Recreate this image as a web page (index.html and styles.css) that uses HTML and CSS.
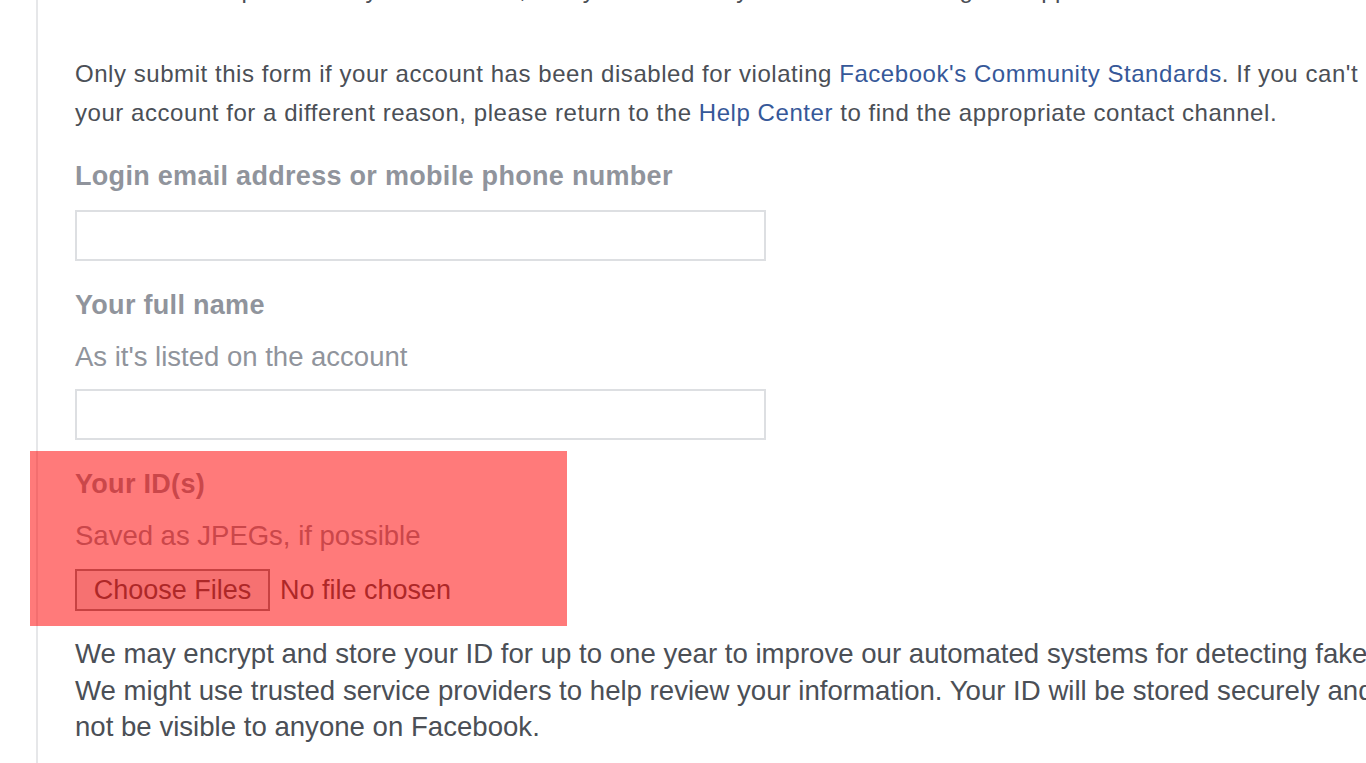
FILE: index.html
```html
<!DOCTYPE html>
<html lang="en">
<head>
<meta charset="utf-8">
<title>Disabled account form</title>
<link rel="stylesheet" href="styles.css">
</head>
<body>
<div class="page">
  <div class="content">
    <p class="text cut">Make sure the photo is of your whole ID, every detail is easy to read and nothing is cropped.</p>
    <p class="text intro">Only submit this form if your account has been disabled for violating <a href="#">Facebook's Community Standards</a>. If you can't log into<br>your account for a different reason, please return to the <a href="#">Help Center</a> to find the appropriate contact channel.</p>

    <div class="field">
      <label class="label">Login email address or mobile phone number</label>
      <div class="input"></div>
    </div>

    <div class="field">
      <label class="label">Your full name</label>
      <div class="hint">As it's listed on the account</div>
      <div class="input"></div>
    </div>

    <div class="field highlight">
      <label class="label">Your ID(s)</label>
      <div class="hint">Saved as JPEGs, if possible</div>
      <div class="file">
        <button class="file-btn" type="button">Choose Files</button>
        <span class="file-name">No file chosen</span>
      </div>
    </div>

    <p class="text outro">We may encrypt and store your ID for up to one year to improve our automated systems for detecting fake accounts.<br>We might use trusted service providers to help review your information. Your ID will be stored securely and will<br>not be visible to anyone on Facebook.</p>
  </div>
</div>
</body>
</html>
```

FILE: styles.css
```css
html, body {
  margin: 0;
  padding: 0;
  background: #ffffff;
  overflow: hidden;
  height: 763px;
}

body {
  font-family: "Liberation Sans", Arial, sans-serif;
  color: #4b4f56;
}

.page {
  margin-left: 36px;
  border-left: 2px solid #e6e7e9;
  height: 763px;
  width: 1700px;
}

.content {
  display: flow-root;
  padding-left: 37px;
}

.text {
  margin: 0;
  white-space: nowrap;
}

.text a {
  color: #365899;
  text-decoration: none;
}

.cut,
.intro {
  font-size: 24px;
  letter-spacing: 0.55px;
}

.cut {
  line-height: 38px;
  margin-top: -29px;
}

.intro {
  line-height: 38.5px;
  margin-top: 46px;
}

.field {
  margin-top: 27px;
  display: flex;
  flex-direction: column;
  align-items: flex-start;
}

.label {
  font-size: 27px;
  font-weight: bold;
  line-height: 34px;
  color: #90949c;
  letter-spacing: 0.3px;
}

.hint {
  font-size: 27.5px;
  line-height: 34px;
  color: #90949c;
  margin-top: 18px;
}

.input {
  box-sizing: border-box;
  width: 691px;
  height: 51px;
  border: 2px solid #dddfe2;
  background: #fff;
  margin-top: 17px;
}

.hint + .input {
  margin-top: 15px;
}

.highlight {
  position: relative;
}

.highlight::after {
  content: "";
  position: absolute;
  top: -16px;
  left: -45px;
  width: 537px;
  bottom: -15px;
  background: rgba(255, 0, 0, 0.52);
}

.file {
  display: flex;
  align-items: center;
  gap: 10px;
  margin-top: 16px;
  height: 42px;
}

.file-btn {
  box-sizing: border-box;
  height: 42px;
  width: 195px;
  padding: 0;
  font-family: "Liberation Sans", Arial, sans-serif;
  font-size: 27px;
  color: #555;
  background: #ececec;
  border: 2px solid #8a8a8a;
  border-radius: 0;
}

.file-name {
  font-size: 27px;
  color: #555;
}

.outro {
  font-size: 27.6px;
  line-height: 36.5px;
  margin-top: 25px;
}
```
